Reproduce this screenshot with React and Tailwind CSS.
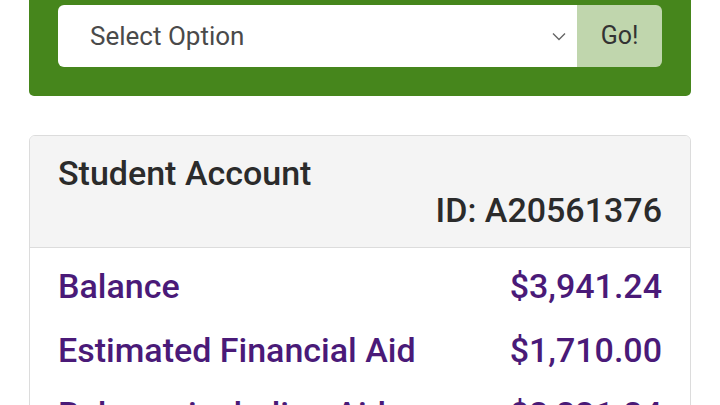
import React from "react";

export default function App() {
  const rows = [
    ["Balance", "$3,941.24"],
    ["Estimated Financial Aid", "$1,710.00"],
    ["Balance including Aid", "$2,231.24"],
  ];
  return (
    <div className="w-[720px] h-[405px] overflow-hidden bg-white" style={{ fontFamily: "Roboto, 'Liberation Sans', sans-serif" }}>
      <div className="mx-[29px] bg-[#46861c] rounded-b-[5px] px-[29px] pt-[5px] pb-[29px]">
        <div className="flex h-[62px] rounded-[6px] overflow-hidden">
          <div className="flex-1 bg-white flex items-center pl-[32px] pr-[10px]">
            <span className="flex-1 text-[26px] text-[#4a4a4a]">Select Option</span>
            <svg width="14" height="9" viewBox="0 0 14 9" className="mr-[1px]">
              <path d="M1 1.5 L7 7.5 L13 1.5" fill="none" stroke="#666" strokeWidth="1.4" />
            </svg>
          </div>
          <div className="w-[85px] bg-[#c0d6ad] flex items-center justify-center text-[25px] text-[#333]">Go!</div>
        </div>
      </div>
      <div className="mx-[29px] mt-[39px] border border-[#dcdcdc] rounded-[6px] overflow-hidden">
        <div className="bg-[#f4f4f4] border-b border-[#dcdcdc] px-[28px] pt-[19px] h-[112px]">
          <div className="text-[34px] font-medium leading-[36px] text-[#2b2b2b]">Student Account</div>
          <div className="text-[34px] font-medium leading-[36px] text-[#2b2b2b] text-right mt-[1px]">ID: A20561376</div>
        </div>
        <div className="px-[28px] pt-[20px]">
          {rows.map(([l, v]) => (
            <div key={l} className="flex justify-between h-[64px] text-[34px] font-medium leading-[36px] text-[#4a1a78]">
              <span>{l}</span>
              <span>{v}</span>
            </div>
          ))}
        </div>
      </div>
    </div>
  );
}
